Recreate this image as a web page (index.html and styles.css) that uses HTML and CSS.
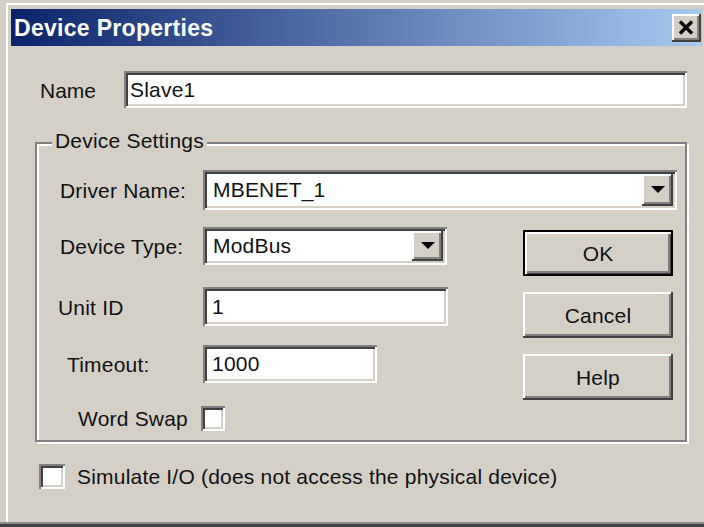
FILE: index.html
```html
<!DOCTYPE html>
<html lang="en">
<head>
<meta charset="utf-8">
<title>Device Properties</title>
<link rel="stylesheet" href="styles.css">
</head>
<body>
<div class="window">
  <div class="titlebar">
    <span class="title">Device Properties</span>
    <span class="close" aria-label="Close">
      <svg width="16" height="15" viewBox="0 0 16 15"><path d="M2 1.5 L14 13.5 M14 1.5 L2 13.5" stroke="#000" stroke-width="3.4" fill="none"/></svg>
    </span>
  </div>

  <div class="content">
    <div class="name-row">
      <span class="name-label">Name</span>
      <div class="field name-field">Slave1</div>
    </div>

    <div class="group">
      <span class="group-label">Device Settings</span>

      <div class="row">
        <span class="lbl">Driver Name:</span>
        <div class="field combo combo-driver">
          <span class="combo-text">MBENET_1</span>
          <span class="drop"><svg width="14" height="7" viewBox="0 0 14 7"><polygon points="0,0 14,0 7,7" fill="#000"/></svg></span>
        </div>
      </div>

      <div class="split">
        <div class="fields">
          <div class="row">
            <span class="lbl">Device Type:</span>
            <div class="field combo combo-type">
              <span class="combo-text">ModBus</span>
              <span class="drop"><svg width="14" height="7" viewBox="0 0 14 7"><polygon points="0,0 14,0 7,7" fill="#000"/></svg></span>
            </div>
          </div>
          <div class="row row-unit">
            <span class="lbl lbl-unit">Unit ID</span>
            <div class="field input-unit">1</div>
          </div>
          <div class="row row-timeout">
            <span class="lbl lbl-timeout">Timeout:</span>
            <div class="field input-timeout">1000</div>
          </div>
          <div class="row row-swap">
            <span class="lbl-swap">Word Swap</span>
            <span class="check check-swap"></span>
          </div>
        </div>

        <div class="buttons">
          <div class="btn btn-default">OK</div>
          <div class="btn">Cancel</div>
          <div class="btn">Help</div>
        </div>
      </div>
    </div>

    <div class="simulate">
      <span class="check check-sim"></span>
      <span class="sim-label">Simulate I/O (does not access the physical device)</span>
    </div>
  </div>
</div>
</body>
</html>
```

FILE: styles.css
```css
* { box-sizing: border-box; }

html, body {
  margin: 0;
  padding: 0;
}

body {
  width: 704px;
  height: 527px;
  overflow: hidden;
  background: #d4d0c8;
  font-family: "Liberation Sans", Arial, sans-serif;
  font-size: 21px;
  letter-spacing: 0.2px;
  color: #111;
}

/* dialog frame */
.window {
  height: 527px;
  padding: 9px 2px 0 11px;
  background: #d4d0c8;
  box-shadow:
    inset 0 -3px 0 #404040,
    inset 0 -5px 0 #8c8c8c,
    inset 6px 3px 0 #d4d0c8,
    inset 8px 5px 0 #ffffff;
}

.titlebar {
  display: flex;
  align-items: center;
  height: 37px;
  padding: 0 1px 0 3px;
  background: linear-gradient(90deg, #0a246a 0%, #a6caf0 100%);
}

.title {
  flex: 1;
  color: #fff;
  font-weight: bold;
  font-size: 23px;
  letter-spacing: 0.3px;
  line-height: 37px;
  padding-top: 2px;
}

/* raised 3D bevel shared by buttons */
.close,
.drop,
.btn {
  background: #d4d0c8;
  box-shadow:
    inset -2px -2px 0 #404040,
    inset 2px 2px 0 #ffffff,
    inset -4px -4px 0 #808080;
}

.close {
  width: 29px;
  height: 28px;
  display: flex;
  align-items: center;
  justify-content: center;
  padding: 0 1px 1px 0;
}

/* sunken edit fields */
.field,
.check {
  background: #fff;
  box-shadow:
    inset 2px 2px 0 #808080,
    inset -2px -2px 0 #ffffff,
    inset 4px 4px 0 #404040,
    inset -4px -4px 0 #d4d0c8;
}

.field {
  display: flex;
  align-items: center;
  padding-left: 9px;
  white-space: nowrap;
}

.content {
  display: flex;
  flex-direction: column;
  align-items: flex-start;
}

.name-row {
  display: flex;
  align-items: center;
  margin: 25px 0 0 29px;
}

.name-label {
  width: 84px;
  padding-top: 3px;
  letter-spacing: 0;
}

.name-field {
  width: 563px;
  height: 37px;
  padding-left: 6px;
}

/* etched group box */
.group {
  position: relative;
  margin: 34px 0 0 24px;
  width: 652px;
  height: 300px;
  border: 2px solid #808080;
  box-shadow: inset 2px 2px 0 #fff, 2px 2px 0 #fff;
  padding: 26px 0 0 23px;
}

.group-label {
  position: absolute;
  top: -15px;
  left: 15px;
  line-height: 24px;
  padding: 0 3px;
  background: #d4d0c8;
}

.row {
  display: flex;
  align-items: center;
}

.lbl {
  width: 143px;
  flex: none;
  padding-top: 2px;
}

.combo {
  padding: 4px;
  padding-left: 10px;
}

.combo-text {
  flex: 1;
}

.drop {
  width: 31px;
  height: 100%;
  display: flex;
  align-items: center;
  justify-content: center;
  padding-bottom: 1px;
}

.combo-driver {
  width: 474px;
  height: 40px;
}

.split {
  display: flex;
  margin-top: 17px;
}

.fields {
  width: 388px;
  flex: none;
}

.combo-type {
  width: 244px;
  height: 38px;
}

.row-unit { margin-top: 22px; }
.lbl-unit { margin-left: -2px; width: 145px; }
.input-unit {
  width: 245px;
  height: 39px;
}

.row-timeout { margin-top: 19px; }
.lbl-timeout { margin-left: 7px; width: 136px; }
.input-timeout {
  width: 174px;
  height: 38px;
}

.row-swap { margin-top: 22px; }
.lbl-swap {
  margin-left: 18px;
  width: 123px;
  padding-top: 2px;
}

.check {
  display: block;
  flex: none;
}

.check-swap {
  width: 24px;
  height: 25px;
}

.buttons {
  margin-left: 75px;
  padding-top: 3px;
  display: flex;
  flex-direction: column;
  gap: 16px;
}

.btn {
  width: 150px;
  height: 46px;
  display: flex;
  align-items: center;
  justify-content: center;
  padding-top: 2px;
}

.btn-default {
  box-shadow:
    inset 0 0 0 2px #000000,
    inset 4px 4px 0 #ffffff,
    inset -3px -3px 0 #404040,
    inset -5px -5px 0 #808080;
}

.simulate {
  display: flex;
  align-items: center;
  margin: 21px 0 0 28px;
}

.check-sim {
  width: 26px;
  height: 25px;
}

.sim-label {
  margin-left: 12px;
  padding-top: 2px;
}
```
